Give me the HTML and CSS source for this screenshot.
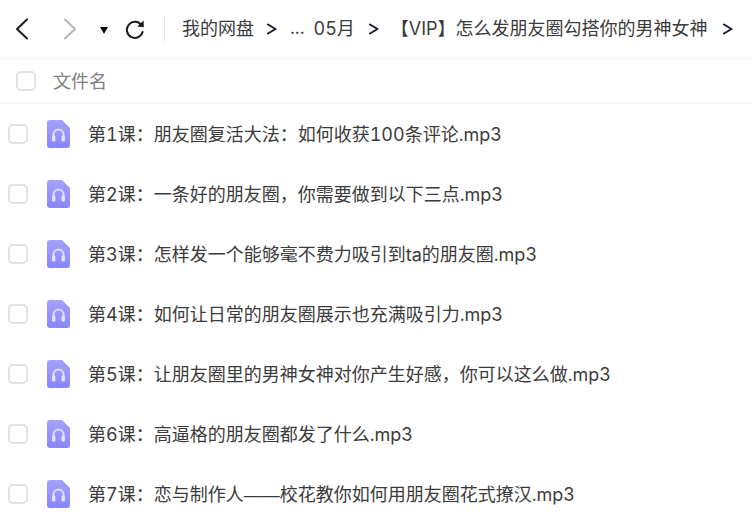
FILE: index.html
```html
<!DOCTYPE html>
<html lang="zh-CN">
<head>
    <title>文件列表</title>
    <link rel="stylesheet" href="styles.css">
</head>
<body>
    <!-- shared icons -->
    <svg class="icon-defs" width="0" height="0">
        <defs>
            <linearGradient id="fileGrad" x1="0" y1="0" x2="0" y2="1">
                <stop offset="0" stop-color="#a3a2fb" />
                <stop offset="1" stop-color="#8886f9" />
            </linearGradient>
        </defs>
        <symbol id="audioFile" viewBox="0 0 23 28">
            <path class="file-bg" d="M3 0h12l8 8v17a3 3 0 0 1-3 3H3a3 3 0 0 1-3-3V3a3 3 0 0 1 3-3z" />
            <path class="file-band" d="M6.500 19v-4.500a5 5 0 0 1 10 0V19" />
            <rect class="file-cup" x="5" y="15.500" width="3.500" height="6" rx="1.500" />
            <rect class="file-cup" x="14.500" y="15.500" width="3.500" height="6" rx="1.500" />
        </symbol>
        <symbol id="crumbArrow" viewBox="0 0 10 12">
            <path class="arrow-line" d="M1 1.500 8.500 6 1 10.500" />
        </symbol>
    </svg>

    <div class="toolbar">
        <div class="nav-buttons">
            <svg class="nav-back" width="16" height="22" viewBox="0 0 16 22"><path d="M13 1.500 3 11l10 9.500" /></svg>
            <svg class="nav-forward" width="16" height="22" viewBox="0 0 16 22"><path d="M3 1.500 13 11 3 20.500" /></svg>
            <span class="nav-caret"></span>
            <svg class="nav-refresh" width="20" height="20" viewBox="0 0 20 20">
                <path d="M16.400 6.200A8 8 0 1 0 17.600 13" />
                <path class="fill" d="M12.200 7.400 18.800 8.200 18.600 1.600z" />
            </svg>
        </div>
        <div class="crumbs">
            <span>我的网盘</span>
            <svg class="crumb-arrow" width="10" height="12"><use href="#crumbArrow" /></svg>
            <span class="crumb-more">...</span>
            <span class="crumb-month">05月</span>
            <svg class="crumb-arrow" width="10" height="12"><use href="#crumbArrow" /></svg>
            <span class="crumb-title">【VIP】怎么发朋友圈勾搭你的男神女神</span>
            <svg class="crumb-arrow" width="10" height="12"><use href="#crumbArrow" /></svg>
        </div>
    </div>

    <div class="list-head">
        <span class="check"></span>
        <span class="list-head-label">文件名</span>
    </div>

    <div class="file-list">
        <div class="file-row">
            <span class="check"></span>
            <svg class="file-icon" width="23" height="28"><use href="#audioFile" /></svg>
            <span class="file-name">第1课：朋友圈复活大法：如何收获100条评论.mp3</span>
        </div>
        <div class="file-row">
            <span class="check"></span>
            <svg class="file-icon" width="23" height="28"><use href="#audioFile" /></svg>
            <span class="file-name">第2课：一条好的朋友圈，你需要做到以下三点.mp3</span>
        </div>
        <div class="file-row">
            <span class="check"></span>
            <svg class="file-icon" width="23" height="28"><use href="#audioFile" /></svg>
            <span class="file-name">第3课：怎样发一个能够毫不费力吸引到ta的朋友圈.mp3</span>
        </div>
        <div class="file-row">
            <span class="check"></span>
            <svg class="file-icon" width="23" height="28"><use href="#audioFile" /></svg>
            <span class="file-name">第4课：如何让日常的朋友圈展示也充满吸引力.mp3</span>
        </div>
        <div class="file-row">
            <span class="check"></span>
            <svg class="file-icon" width="23" height="28"><use href="#audioFile" /></svg>
            <span class="file-name">第5课：让朋友圈里的男神女神对你产生好感，你可以这么做.mp3</span>
        </div>
        <div class="file-row">
            <span class="check"></span>
            <svg class="file-icon" width="23" height="28"><use href="#audioFile" /></svg>
            <span class="file-name">第6课：高逼格的朋友圈都发了什么.mp3</span>
        </div>
        <div class="file-row">
            <span class="check"></span>
            <svg class="file-icon" width="23" height="28"><use href="#audioFile" /></svg>
            <span class="file-name">第7课：恋与制作人<span class="dashes">——</span>校花教你如何用朋友圈花式撩汉.mp3</span>
        </div>
    </div>
</body>
</html>
```

FILE: styles.css
```css
html, body { height: 100%; }
body {
    margin: 0;
    overflow: hidden;
    background-color: #fff;
    color: #3b3b3b;
    font-family: Inter, "Noto Sans CJK SC", sans-serif;
    font-size: 18px;
    font-variant-numeric: tabular-nums;
}
svg { display: block; flex: none; }
svg path { fill: none; stroke-linecap: round; stroke-linejoin: round; }
.icon-defs { position: absolute; }
.dashes { font-family: "Liberation Sans", sans-serif; }

.toolbar {
    display: flex;
    align-items: center;
    height: 58px;
    border-bottom: 1px solid #efeff1;
}
.nav-buttons {
    display: flex;
    align-items: center;
    height: 26px;
    padding-left: 14px;
    padding-right: 19px;
    border-right: 1px solid #e8e8e8;
}
.nav-back path { stroke: #1c1c1c; stroke-width: 2; }
.nav-forward { margin-left: 32px; }
.nav-forward path { stroke: #b4b4b4; stroke-width: 2; }
.nav-caret {
    width: 0;
    height: 0;
    margin-left: 22px;
    margin-top: 2px;
    border-left: 4.5px solid transparent;
    border-right: 4.5px solid transparent;
    border-top: 7px solid #111;
}
.nav-refresh { margin-left: 17px; }
.nav-refresh path { stroke: #1c1c1c; stroke-width: 2; }
.nav-refresh .fill { fill: #1c1c1c; stroke: none; }

.crumbs {
    display: flex;
    align-items: center;
    padding-left: 17px;
    white-space: nowrap;
}
.crumbs span { margin-bottom: 4px; }
.crumb-arrow { margin-left: 13px; }
.arrow-line { stroke: #1a1a2a; stroke-width: 2; }
.crumb-more { margin-left: 13px; }
.crumb-month { margin-left: 9px; margin-right: 1px; }
.crumb-title { margin-left: 12px; margin-right: 2px; }

.list-head {
    display: flex;
    align-items: center;
    gap: 17px;
    height: 44px;
    padding-left: 16px;
    border-bottom: 1px solid #f3f3f5;
}
.list-head-label { color: #808080; margin-bottom: 3px; }

.check {
    flex: none;
    box-sizing: border-box;
    width: 20px;
    height: 20px;
    border: 2px solid #e2e2e2;
    border-radius: 5px;
    background-color: #fff;
}

.file-row {
    display: flex;
    align-items: center;
    height: 60px;
    padding-left: 8px;
    white-space: nowrap;
}
.file-icon { margin-left: 19px; }
svg path.file-bg { fill: url(#fileGrad); stroke: none; }
svg path.file-band { stroke: #d9d9ff; stroke-width: 2.2; }
.file-cup { fill: #e3e3ff; }
.file-name { margin-left: 18px; margin-bottom: 3px; }
```
